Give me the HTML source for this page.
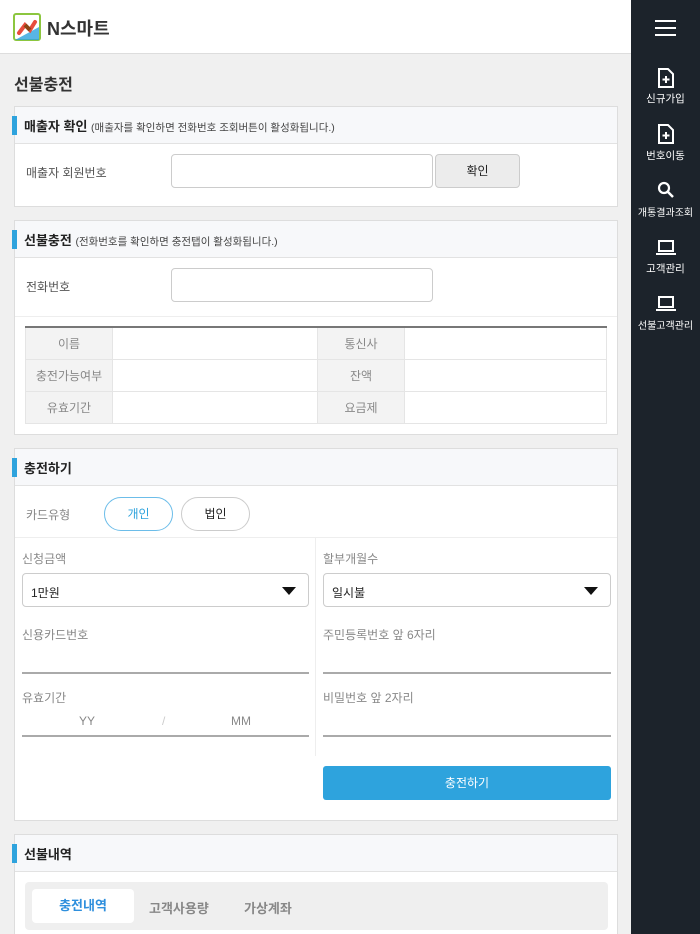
<!DOCTYPE html>
<html><head><meta charset="utf-8"><style>
*{box-sizing:border-box;margin:0;padding:0}
html,body{width:700px;height:934px;overflow:hidden}
body{background:#f0f0f0;font-family:"Liberation Sans","Noto Sans CJK KR",sans-serif;position:relative;color:#333}
.a{position:absolute}
.hdr{left:0;top:0;width:631px;height:54px;background:#fff;border-bottom:1px solid #ddd}
.side{left:631px;top:0;width:69px;height:934px;background:#1c232b;color:#fff}
.sec{background:#fff;border:1px solid #ddd}
.sh{position:absolute;left:0;top:0;right:0;height:37px;background:#f7f8fa;border-bottom:1px solid #e2e2e2}
.bar{position:absolute;left:-3px;top:9px;width:5px;height:19px;background:#2ea3dd}
.st{position:absolute;left:9px;top:9px;font-size:13px;font-weight:bold;color:#222}
.st small{font-size:10.5px;font-weight:normal;color:#444}
.lbl{font-size:12px;color:#555}
.inp{background:#fff;border:1px solid #ccc;border-radius:4px}
.glbl{font-size:12px;color:#888}
.line{height:2px;background:#aaa}
.si{position:absolute;width:69px;text-align:center;font-size:10.5px}
td{border:1px solid #e5e5e5;height:32px;font-size:12px}
td.h{background:#f3f3f3;color:#888;text-align:center;width:87px}
</style></head><body>
<div class="a hdr">
<svg class="a" style="left:13px;top:13px" width="28" height="28" viewBox="0 0 28 28"><rect x="1" y="1" width="26" height="26" rx="2" fill="#fff" stroke="#8cc63f" stroke-width="2"/><path d="M2 27 L26 27 L26 14 Z" fill="#2ea3dd" opacity=".8"/><path d="M6 20 L12 12 L17 17 L22 9" stroke="#e84c3d" stroke-width="4" fill="none" stroke-linecap="round"/><path d="M12 12 L17 17" stroke="#8b4513" stroke-width="4"/></svg>
<div class="a" style="left:47px;top:15px;font-size:18px;font-weight:bold;color:#333">N스마트</div>
</div>
<div class="a side">
<div class="a" style="left:24px;top:20px;width:21px;height:2px;background:#fff;box-shadow:0 7px 0 #fff,0 14px 0 #fff"></div>
<svg class="a" style="left:26px;top:68px" width="18" height="20" viewBox="0 0 18 20"><path d="M2 1h9l5 5v13H2z" fill="none" stroke="#fff" stroke-width="2"/><path d="M9 8v7M5.5 11.5h7" stroke="#fff" stroke-width="2"/></svg>
<div class="si" style="top:91px">신규가입</div>
<svg class="a" style="left:26px;top:124px" width="18" height="20" viewBox="0 0 18 20"><path d="M2 1h9l5 5v13H2z" fill="none" stroke="#fff" stroke-width="2"/><path d="M9 8v7M5.5 11.5h7" stroke="#fff" stroke-width="2"/></svg>
<div class="si" style="top:148px">번호이동</div>
<svg class="a" style="left:26px;top:181px" width="18" height="18" viewBox="0 0 18 18"><circle cx="7" cy="7" r="5" fill="none" stroke="#fff" stroke-width="2.2"/><path d="M11 11l5 5" stroke="#fff" stroke-width="2.5"/></svg>
<div class="si" style="top:204px;font-size:10px">개통결과조회</div>
<svg class="a" style="left:25px;top:240px" width="20" height="15" viewBox="0 0 20 15"><rect x="3" y="1" width="14" height="10" fill="none" stroke="#fff" stroke-width="2"/><path d="M0 14h20" stroke="#fff" stroke-width="2"/></svg>
<div class="si" style="top:261px">고객관리</div>
<svg class="a" style="left:25px;top:296px" width="20" height="15" viewBox="0 0 20 15"><rect x="3" y="1" width="14" height="10" fill="none" stroke="#fff" stroke-width="2"/><path d="M0 14h20" stroke="#fff" stroke-width="2"/></svg>
<div class="si" style="top:317px;font-size:10px">선불고객관리</div>
</div>

<div class="a" style="left:14px;top:71px;font-size:16px;font-weight:bold;color:#333">선불충전</div>

<div class="a sec" style="left:14px;top:106px;width:604px;height:101px">
<div class="sh"><div class="bar"></div><div class="st">매출자 확인 <small>(매출자를 확인하면 전화번호 조회버튼이 활성화됩니다.)</small></div></div>
<div class="a lbl" style="left:11px;top:57px">매출자 회원번호</div>
<div class="a inp" style="left:156px;top:47px;width:262px;height:34px"></div>
<div class="a" style="left:420px;top:47px;width:85px;height:34px;background:#ececec;border:1px solid #ccc;border-radius:4px;text-align:center;line-height:32px;font-size:12px;color:#222">확인</div>
</div>

<div class="a sec" style="left:14px;top:220px;width:604px;height:215px">
<div class="sh"><div class="bar"></div><div class="st">선불충전 <small>(전화번호를 확인하면 충전탭이 활성화됩니다.)</small></div></div>
<div class="a lbl" style="left:11px;top:57px">전화번호</div>
<div class="a inp" style="left:156px;top:47px;width:262px;height:34px"></div>
<div class="a" style="left:0;top:95px;width:602px;height:1px;background:#eee"></div>
<table class="a" style="left:10px;top:105px;width:582px;border-collapse:collapse;border-top:2px solid #777">
<tr><td class="h">이름</td><td></td><td class="h">통신사</td><td style="width:202px"></td></tr>
<tr><td class="h">충전가능여부</td><td></td><td class="h">잔액</td><td></td></tr>
<tr><td class="h">유효기간</td><td></td><td class="h">요금제</td><td></td></tr>
</table>
</div>

<div class="a sec" style="left:14px;top:448px;width:604px;height:373px">
<div class="sh"><div class="bar"></div><div class="st">충전하기</div></div>
<div class="a glbl" style="left:11px;top:57px">카드유형</div>
<div class="a" style="left:89px;top:48px;width:69px;height:34px;border:1px solid #6cbde9;border-radius:17px;text-align:center;line-height:32px;font-size:12px;color:#2ea3dd">개인</div>
<div class="a" style="left:166px;top:48px;width:69px;height:34px;border:1px solid #ccc;border-radius:17px;text-align:center;line-height:32px;font-size:12px;color:#222">법인</div>
<div class="a" style="left:0;top:88px;width:602px;height:1px;background:#eee"></div>
<div class="a" style="left:300px;top:89px;width:1px;height:218px;background:#eee"></div>
<div class="a glbl" style="left:7px;top:101px">신청금액</div>
<div class="a inp" style="left:7px;top:124px;width:287px;height:34px;font-size:12px;color:#222;padding:10px 0 0 8px">1만원<span class="a" style="right:12px;top:13px;border:7px solid transparent;border-top:8px solid #111;border-bottom:0"></span></div>
<div class="a glbl" style="left:308px;top:101px">할부개월수</div>
<div class="a inp" style="left:308px;top:124px;width:288px;height:34px;font-size:12px;color:#222;padding:10px 0 0 8px">일시불<span class="a" style="right:12px;top:13px;border:7px solid transparent;border-top:8px solid #111;border-bottom:0"></span></div>
<div class="a glbl" style="left:7px;top:177px">신용카드번호</div>
<div class="a line" style="left:7px;top:223px;width:287px"></div>
<div class="a glbl" style="left:308px;top:177px">주민등록번호 앞 6자리</div>
<div class="a line" style="left:308px;top:223px;width:288px"></div>
<div class="a glbl" style="left:7px;top:240px">유효기간</div>
<div class="a glbl" style="left:64px;top:265px">YY</div>
<div class="a" style="left:147px;top:265px;font-size:12px;color:#ccc">/</div>
<div class="a glbl" style="left:216px;top:265px">MM</div>
<div class="a line" style="left:7px;top:286px;width:287px"></div>
<div class="a glbl" style="left:308px;top:240px">비밀번호 앞 2자리</div>
<div class="a line" style="left:308px;top:286px;width:288px"></div>
<div class="a" style="left:308px;top:317px;width:288px;height:34px;background:#2ea3dd;border-radius:3px;color:#fff;text-align:center;line-height:34px;font-size:12px">충전하기</div>
</div>

<div class="a sec" style="left:14px;top:834px;width:604px;height:100px;border-bottom:0">
<div class="sh"><div class="bar"></div><div class="st">선불내역</div></div>
<div class="a" style="left:10px;top:47px;width:583px;height:48px;background:#efefef;border-radius:4px"></div>
<div class="a" style="left:17px;top:54px;width:102px;height:34px;background:#fff;border-radius:4px;text-align:center;line-height:34px;font-size:13px;font-weight:bold;color:#2e8fdd">충전내역</div>
<div class="a" style="left:134px;top:63px;font-size:13px;font-weight:bold;color:#888">고객사용량</div>
<div class="a" style="left:229px;top:63px;font-size:13px;font-weight:bold;color:#888">가상계좌</div>
</div>
</body></html>
